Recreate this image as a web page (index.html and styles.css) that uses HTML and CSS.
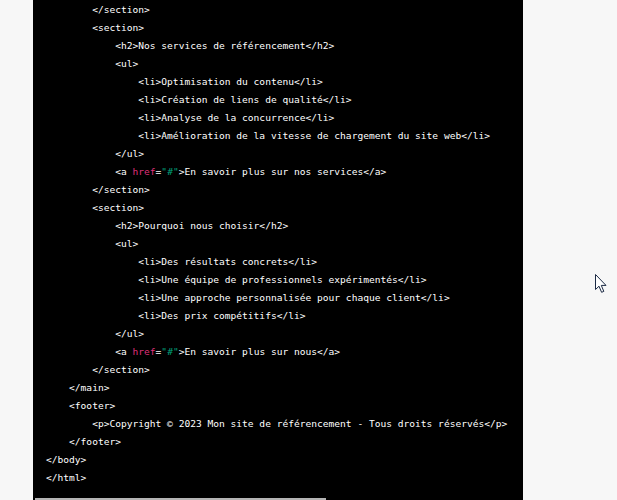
FILE: index.html
```html
<!DOCTYPE html>
<html lang="fr">
<head>
<meta charset="utf-8">
<link rel="stylesheet" href="styles.css">
</head>
<body>
<div class="code">
<pre class="src">        &lt;/section&gt;
        &lt;section&gt;
            &lt;h2&gt;Nos services de référencement&lt;/h2&gt;
            &lt;ul&gt;
                &lt;li&gt;Optimisation du contenu&lt;/li&gt;
                &lt;li&gt;Création de liens de qualité&lt;/li&gt;
                &lt;li&gt;Analyse de la concurrence&lt;/li&gt;
                &lt;li&gt;Amélioration de la vitesse de chargement du site web&lt;/li&gt;
            &lt;/ul&gt;
            &lt;a <span class="attr">href</span>=<span class="str">"#"</span>&gt;En savoir plus sur nos services&lt;/a&gt;
        &lt;/section&gt;
        &lt;section&gt;
            &lt;h2&gt;Pourquoi nous choisir&lt;/h2&gt;
            &lt;ul&gt;
                &lt;li&gt;Des résultats concrets&lt;/li&gt;
                &lt;li&gt;Une équipe de professionnels expérimentés&lt;/li&gt;
                &lt;li&gt;Une approche personnalisée pour chaque client&lt;/li&gt;
                &lt;li&gt;Des prix compétitifs&lt;/li&gt;
            &lt;/ul&gt;
            &lt;a <span class="attr">href</span>=<span class="str">"#"</span>&gt;En savoir plus sur nous&lt;/a&gt;
        &lt;/section&gt;
    &lt;/main&gt;
    &lt;footer&gt;
        &lt;p&gt;Copyright © 2023 Mon site de référencement - Tous droits réservés&lt;/p&gt;
    &lt;/footer&gt;
&lt;/body&gt;
&lt;/html&gt;</pre>
<div class="track"><div class="thumb"></div></div>
</div>
<svg class="cursor" width="13" height="20" viewBox="0 0 13 20"><path d="M0.5 0.5 L0.5 15.5 L4 12.2 L6.6 18.3 L8.8 17.4 L6.3 11.4 L11 11.4 Z" fill="#fff" stroke="#1b2a44" stroke-width="1" stroke-linejoin="round"/></svg>
</body>
</html>
```
FILE: styles.css
```css
html, body {
  margin: 0;
  padding: 0;
  overflow: hidden;
  background: #f7f7f7;
  height: 500px;
}
.code {
  margin-left: 33px;
  width: 490px;
  background: #000;
}
.src {
  margin: 0;
  padding: 1px 0 11px 13px;
  font-family: "DejaVu Sans Mono", "Liberation Mono", monospace;
  font-size: 9.58px;
  line-height: 18px;
  color: #fff;
  white-space: pre;
  overflow: hidden;
}
.attr { color: #df3079; }
.str { color: #00a67d; }
.track {
  height: 2px;
  padding-left: 2px;
}
.thumb {
  width: 291px;
  height: 2px;
  background: #b4b4b4;
}
.cursor {
  position: absolute;
  left: 595px;
  top: 274px;
}
```
